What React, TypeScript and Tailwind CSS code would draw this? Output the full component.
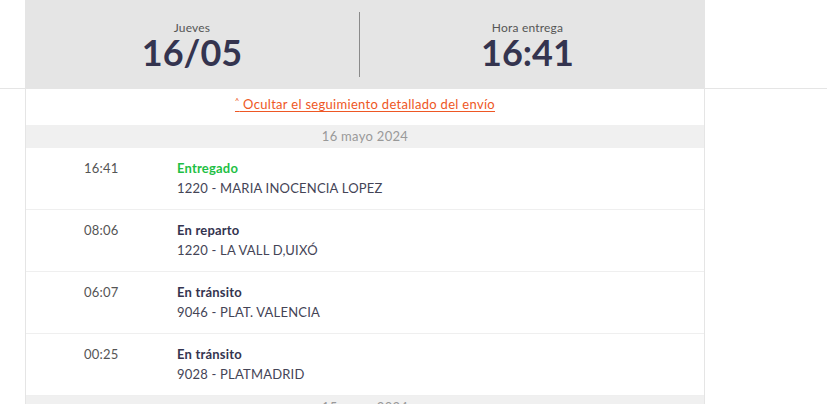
import React from 'react';

type Evento = {
    hora: string;
    estado: string;
    lugar: string;
    entregado?: boolean;
};

const eventos: Evento[] = [
    { hora: '16:41', estado: 'Entregado', lugar: '1220 - MARIA INOCENCIA LOPEZ', entregado: true },
    { hora: '08:06', estado: 'En reparto', lugar: '1220 - LA VALL D,UIXÓ' },
    { hora: '06:07', estado: 'En tránsito', lugar: '9046 - PLAT. VALENCIA' },
    { hora: '00:25', estado: 'En tránsito', lugar: '9028 - PLATMADRID' },
];

const App: React.FC = () => {
    return (
        <div className="w-[827px] h-[404px] overflow-hidden bg-white font-['Lato','Liberation_Sans',sans-serif] text-[#34344f]">
            {/* resumen de entrega */}
            <div className="border-b border-[#e5e5e5]">
                <div className="ml-[25px] w-[680px] h-[88px] bg-[#e5e5e5] flex items-center">
                    <div className="w-[334px] flex flex-col items-center pt-[4px]">
                        <span className="text-[12px] leading-[12px] text-[#555] tracking-[0.2px]">Jueves</span>
                        <span className="text-[36px] leading-[36px] font-bold">16/05</span>
                    </div>
                    <div className="w-px h-[65px] bg-[#8a8a8a]" />
                    <div className="flex-1 flex flex-col items-center pt-[4px] pr-[10px]">
                        <span className="text-[12px] leading-[12px] text-[#555] tracking-[0.2px]">Hora entrega</span>
                        <span className="text-[36px] leading-[36px] font-bold">16:41</span>
                    </div>
                </div>
            </div>

            {/* seguimiento */}
            <div className="ml-[25px] w-[680px] border-x border-[#e5e5e5] -mt-px">
                <div className="h-[37px] flex items-center justify-center pb-[3px]">
                    <a href="#" className="text-[13px] tracking-[0.3px] text-[#ee5724] underline underline-offset-2">
                        <span className="text-[9px] align-top">˄</span> Ocultar el seguimiento detallado del envío
                    </a>
                </div>
                <div className="h-[23px] bg-[#f0f0f0] flex items-center justify-center text-[13px] tracking-[0.3px] text-[#999]">
                    16 mayo 2024
                </div>
                {eventos.map((ev) => (
                    <div key={ev.hora} className="h-[62px] border-b border-[#efefef] flex pt-[12px] tracking-[0.2px]">
                        <div className="w-[151px] pl-[58px] text-[13px] leading-[16px] text-[#555]">{ev.hora}</div>
                        <div className="flex flex-col gap-[4px]">
                            <span className={`text-[13px] leading-[16px] font-bold ${ev.entregado ? 'text-[#1fbf45]' : 'text-[#34344f]'}`}>
                                {ev.estado}
                            </span>
                            <span className="text-[13px] leading-[16px] text-[#444456]">{ev.lugar}</span>
                        </div>
                    </div>
                ))}
                <div className="h-[23px] bg-[#f0f0f0] flex items-center justify-center text-[13px] tracking-[0.3px] text-[#999]">
                    15 mayo 2024
                </div>
            </div>
        </div>
    );
};

export default App;
